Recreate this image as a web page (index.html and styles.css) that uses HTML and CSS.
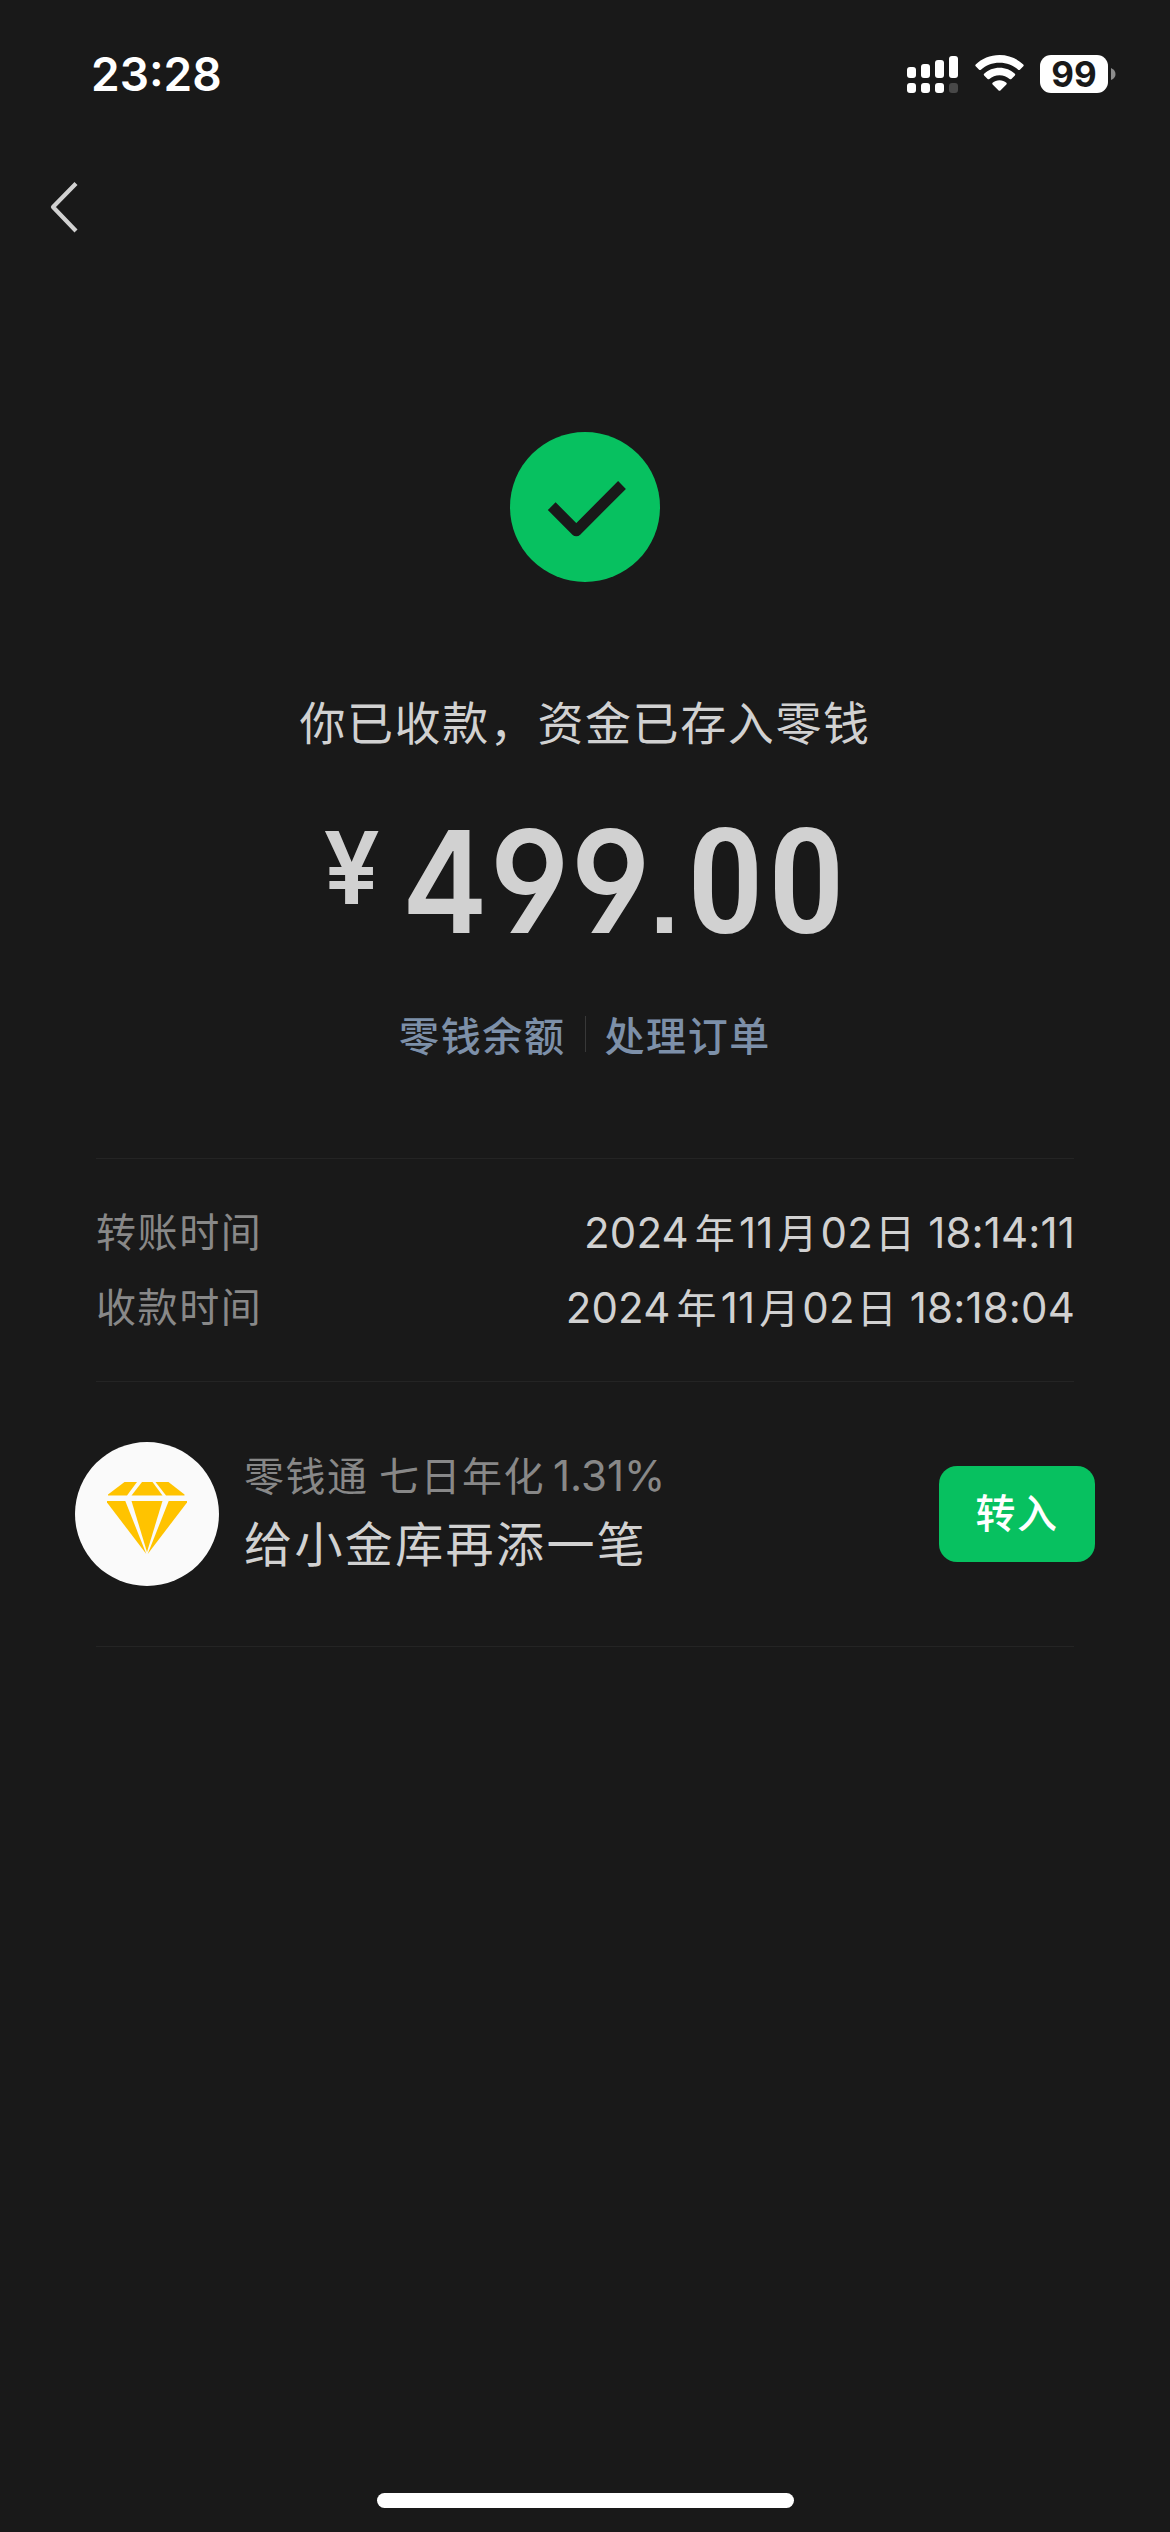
FILE: index.html
```html
<!DOCTYPE html>
<html lang="zh-CN">
<head>
<meta charset="utf-8">
<title>收款成功</title>
<link rel="stylesheet" href="styles.css">
</head>
<body>
<div class="screen">
  <header class="status-bar">
    <time class="clock">23:28</time>
    <div class="indicators">
      <svg class="signal" width="51" height="38" viewBox="0 0 51 38">
        <g fill="#fff">
          <rect x="0" y="12" width="9" height="11" rx="3"/>
          <rect x="14" y="9" width="9" height="14" rx="3"/>
          <rect x="28" y="5" width="9" height="18" rx="3"/>
          <rect x="42" y="1" width="9" height="22" rx="3"/>
          <rect x="0" y="28" width="9" height="10" rx="3"/>
          <rect x="14" y="28" width="9" height="10" rx="3"/>
          <rect x="28" y="28" width="9" height="10" rx="3"/>
        </g>
        <rect x="42" y="28" width="9" height="10" rx="3" fill="#484848"/>
      </svg>
      <svg class="wifi" width="49" height="37" viewBox="0 0 49 37">
        <g fill="#fff">
          <path d="M24.500 0C33.800 0 42.300 3.700 48.300 9.500Q49.100 10.400 48.300 11.300L44.900 14.700Q44 15.500 43.100 14.700C38.200 10.300 31.700 7.700 24.500 7.700S10.800 10.300 5.900 14.700Q5 15.500 4.100 14.700L.7 11.300Q-.1 10.400 .7 9.500C6.700 3.700 15.200 0 24.500 0Z"/>
          <path d="M24.500 12.700C30.500 12.700 35.900 15 39.900 18.700Q40.700 19.500 39.900 20.400L36.400 23.900Q35.500 24.700 34.600 23.900C31.900 21.600 28.400 20.200 24.500 20.200S17.100 21.600 14.400 23.900Q13.500 24.700 12.600 23.900L9.100 20.400Q8.300 19.500 9.100 18.700C13.100 15 18.500 12.700 24.500 12.700Z"/>
          <path d="M24.500 25.300C27.200 25.300 29.600 26.200 31.400 27.700Q32.200 28.500 31.400 29.400L25.400 35.400Q24.500 36.300 23.600 35.400L17.600 29.400Q16.800 28.500 17.600 27.700C19.400 26.200 21.800 25.300 24.500 25.300Z"/>
        </g>
      </svg>
      <div class="battery">
        <span class="battery-level">99</span>
        <svg width="5" height="12" viewBox="0 0 5 12"><path d="M0 0Q4.500 2 4.500 6T0 12Z" fill="#8c8c8c"/></svg>
      </div>
    </div>
  </header>

  <nav class="nav">
    <svg width="28" height="52" viewBox="0 0 28 52"><path d="M26 2.500L3 26L26 50" fill="none" stroke="#d1d1d1" stroke-width="4.200" stroke-linejoin="round"/></svg>
  </nav>

  <main>
    <section class="result">
      <svg class="result-icon" width="150" height="150" viewBox="0 0 150 150">
        <circle cx="75" cy="75" r="75" fill="#07c160"/>
        <path d="M41.700 74.200L66.300 98.800L112 53" fill="none" stroke="#191919" stroke-width="11" stroke-linejoin="round"/>
      </svg>
      <h1 class="result-title">你已收款，资金已存入零钱</h1>
      <p class="amount"><span class="currency">¥</span><span class="value"><span class="digit four">4</span><span class="digit">9</span><span class="digit">9</span><span class="point">.</span><span class="digit zero">0</span><span class="digit zero">0</span></span></p>
      <div class="links">
        <a class="link">零钱余额</a>
        <span class="link-divider"></span>
        <a class="link">处理订单</a>
      </div>
    </section>

    <dl class="details">
      <div class="row"><dt>转账时间</dt><dd>2024<i class="year">年</i>11<i class="month">月</i>02<i class="day">日</i> 18:14:11</dd></div>
      <div class="row"><dt>收款时间</dt><dd>2024<i class="year">年</i>11<i class="month">月</i>02<i class="day">日</i> 18:18:04</dd></div>
    </dl>

    <section class="promo">
      <svg class="promo-icon" width="144" height="144" viewBox="0 0 144 144">
        <circle cx="72" cy="72" r="72" fill="#fafafa"/>
        <g fill="#ffc300">
          <path d="M49.500 40H62L52 53.500H33V52.500Z"/>
          <path d="M67 40H77.500L87.500 53.500H56.500Z"/>
          <path d="M80.500 40H93.500L109.500 52.500V53.500H91Z"/>
          <path d="M32 59H50.300L71.300 112L32 60.500Z"/>
          <path d="M56.500 59H87.500L72 110Z"/>
          <path d="M93.700 59H112V60.500L72.700 112Z"/>
        </g>
      </svg>
      <div class="promo-text">
        <p class="promo-rate">零钱通 七日年化<span class="rate">1.31%</span></p>
        <p class="promo-title">给小金库再添一笔</p>
      </div>
      <button class="promo-button">转入</button>
    </section>
  </main>

  <div class="home-indicator"></div>
</div>
</body>
</html>
```
FILE: styles.css
```css
* {
  box-sizing: border-box;
  margin: 0;
  padding: 0;
}

body {
  background: #191919;
}

.screen {
  display: flex;
  flex-direction: column;
  width: 1170px;
  height: 2532px;
  padding-bottom: 24px;
  background: #191919;
  color: #d1d1d1;
  font-family: Inter, "Noto Sans CJK SC", sans-serif;
}

svg {
  display: block;
  flex: none;
}

.status-bar {
  display: flex;
  justify-content: space-between;
  height: 141px;
  padding: 55px 54px 0 91px;
  color: #fff;
}

.clock {
  height: 38px;
  font-size: 46px;
  font-weight: 600;
  line-height: 38px;
}

.indicators {
  display: flex;
  height: 38px;
}

.wifi {
  margin-left: 17px;
}

.battery {
  display: flex;
  align-items: center;
  gap: 3px;
  margin-left: 16px;
}

.battery-level {
  width: 68px;
  height: 38px;
  border-radius: 11px;
  background: #fff;
  color: #191919;
  font-size: 35px;
  font-weight: 700;
  line-height: 39px;
  text-align: center;
}

.nav {
  height: 132px;
  padding: 40px 50px;
}

.result {
  display: flex;
  flex-direction: column;
  align-items: center;
  height: 885px;
  padding-top: 159px;
}

.result-title {
  margin-top: 103px;
  font-family: "Noto Sans CJK SC", sans-serif;
  font-size: 46px;
  font-weight: 400;
  letter-spacing: 1.6px;
  line-height: 70px;
}

.amount {
  display: flex;
  align-items: flex-start;
  height: 150px;
  margin-top: 51px;
  font-weight: 600;
}

.currency {
  width: 82px;
  font-size: 100px;
  line-height: 123px;
}

.value {
  display: flex;
  align-items: baseline;
  font-size: 142px;
  line-height: 150px;
}

.digit {
  width: 81px;
  text-align: center;
  font-feature-settings: "cv04";
  transform: scaleX(0.93);
}

.four {
  transform: translateX(-8px) scaleX(0.91);
}

.zero {
  font-family: "Roboto Condensed", Roboto, sans-serif;
  font-size: 146px;
  font-weight: 500;
  transform: scaleX(1.08);
}

.point {
  width: 36px;
  padding-right: 4px;
  font-family: "Liberation Sans", sans-serif;
  font-size: 106px;
  font-weight: 700;
  text-align: center;
}

.links {
  display: flex;
  align-items: center;
  margin-top: 48px;
}

.link {
  color: #7d90a9;
  font-family: "Noto Sans CJK SC", sans-serif;
  font-size: 40px;
  font-weight: 500;
  letter-spacing: 1.6px;
  line-height: 60px;
}

.link-divider {
  width: 1px;
  height: 36px;
  margin: 0 19px;
  background: #383838;
}

.details {
  display: flex;
  flex-direction: column;
  height: 224px;
  margin: 0 96px;
  padding-top: 36px;
  border-top: 1px solid #242424;
  border-bottom: 1px solid #242424;
}

.row {
  display: flex;
  justify-content: space-between;
  height: 75px;
  line-height: 75px;
}

.row dt {
  color: #888;
  font-family: "Noto Sans CJK SC", sans-serif;
  font-size: 40px;
  letter-spacing: 1.6px;
  line-height: 71px;
}

.row dd {
  margin-right: -1px;
  font-size: 42px;
  letter-spacing: 0.15px;
}

.row i {
  font-style: normal;
  font-size: 40px;
}

.year {
  margin: 0 4px 0 6px;
}

.month {
  margin: 0 3px 0 4px;
}

.day {
  margin: 0 1px 0 2px;
}

.promo {
  display: flex;
  align-items: center;
  height: 265px;
  padding: 0 75px 1px;
  background: linear-gradient(#242424, #242424) center bottom / 978px 1px no-repeat;
}

.promo-text {
  flex: 1;
  margin: 0 0 5px 25px;
}

.promo-rate {
  color: #888;
  font-family: "Noto Sans CJK SC", sans-serif;
  font-size: 40px;
  letter-spacing: 1.5px;
  line-height: 59px;
}

.rate {
  margin-left: 8px;
  font-family: Inter, sans-serif;
  font-size: 42px;
  letter-spacing: 0;
  line-height: 1;
}

.promo-title {
  font-family: "Noto Sans CJK SC", sans-serif;
  font-size: 48px;
  letter-spacing: 2.4px;
  line-height: 74px;
}

.promo-button {
  width: 156px;
  height: 96px;
  padding-bottom: 5px;
  border: 0;
  border-radius: 18px;
  background: #07c160;
  color: #fff;
  font-family: "Noto Sans CJK SC", sans-serif;
  font-size: 40px;
  font-weight: 500;
  letter-spacing: 1.6px;
  line-height: 91px;
}

.home-indicator {
  width: 417px;
  height: 15px;
  margin: auto auto 0;
  border-radius: 8px;
  background: #fff;
}
```
